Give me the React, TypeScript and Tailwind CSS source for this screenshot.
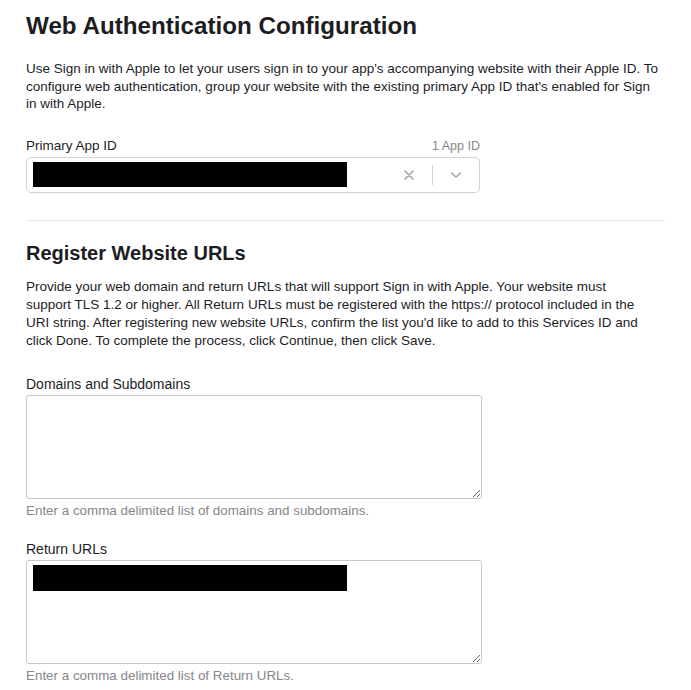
import React from "react";

export default function App() {
  return (
    <div className="min-h-screen bg-white px-[26px] pt-[12px] text-[#1d1d1f]" style={{ fontFamily: '"Liberation Sans", Arial, sans-serif' }}>
      <h1 className="text-[24.2px] font-bold leading-[28px]">Web Authentication Configuration</h1>
      <p className="mt-[20px] text-[13.5px] leading-[17.5px] text-[#1d1d1f]">
        Use Sign in with Apple to let your users sign in to your app's accompanying website with their Apple ID. To
        <br />
        configure web authentication, group your website with the existing primary App ID that's enabled for Sign
        <br />
        in with Apple.
      </p>

      <div className="mt-[25px] w-[454px]">
        <div className="flex items-end justify-between">
          <span className="text-[13.5px] leading-[16px]">Primary App ID</span>
          <span className="text-[12.5px] leading-[16px] text-[#86868b]">1 App ID</span>
        </div>
        <div className="mt-[3px] flex h-[36px] items-center rounded-[5px] border border-[#d2d2d7] pl-[6px]">
          <div className="h-[25px] w-[314px] bg-black" />
          <div className="flex-1" />
          <div className="flex h-full items-center">
            <svg width="10" height="10" viewBox="0 0 10 10" className="mr-[18px]">
              <path d="M1 1 L9 9 M9 1 L1 9" stroke="#a1a1a6" strokeWidth="1.6" strokeLinecap="round" />
            </svg>
            <div className="h-[20px] w-px bg-[#d2d2d7]" />
            <svg width="12" height="8" viewBox="0 0 12 8" className="mx-[17px]">
              <path d="M1.5 2 L6 6 L10.5 2" stroke="#a1a1a6" strokeWidth="1.5" fill="none" strokeLinecap="round" strokeLinejoin="round" />
            </svg>
          </div>
        </div>
      </div>

      <div className="mt-[27px] h-px bg-[#e8e8ed]" />

      <h2 className="mt-[20px] text-[20px] font-bold leading-[24px]">Register Website URLs</h2>
      <p className="mt-[13px] text-[13.5px] leading-[18px]">
        Provide your web domain and return URLs that will support Sign in with Apple. Your website must
        <br />
        support TLS 1.2 or higher. All Return URLs must be registered with the https:// protocol included in the
        <br />
        URI string. After registering new website URLs, confirm the list you'd like to add to this Services ID and
        <br />
        click Done. To complete the process, click Continue, then click Save.
      </p>

      <div className="mt-[26px] w-[456px]">
        <div className="text-[14px] leading-[17px]">Domains and Subdomains</div>
        <textarea className="mt-[2px] block h-[104px] w-full resize-y rounded-[3px] border border-[#c7c7cc] outline-none" />
        <div className="mt-[4px] text-[13.4px] leading-[16px] text-[#86868b]">Enter a comma delimited list of domains and subdomains.</div>
      </div>

      <div className="mt-[22px] w-[456px]">
        <div className="text-[14px] leading-[17px]">Return URLs</div>
        <div className="relative mt-[2px]">
          <textarea className="block h-[104px] w-full resize-y rounded-[3px] border border-[#c7c7cc] outline-none" />
          <div className="absolute left-[7px] top-[5px] h-[26px] w-[314px] bg-black" />
        </div>
        <div className="mt-[4px] text-[13.4px] leading-[16px] text-[#86868b]">Enter a comma delimited list of Return URLs.</div>
      </div>
    </div>
  );
}
